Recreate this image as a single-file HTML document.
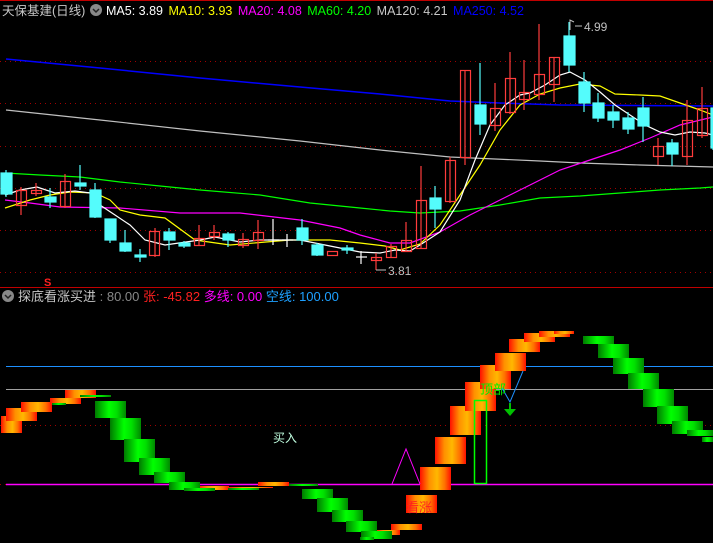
<!DOCTYPE html>
<html><head><meta charset="utf-8"><style>
body{margin:0;background:#000;width:713px;height:543px;overflow:hidden;font-family:"Liberation Sans","Noto Sans CJK SC",sans-serif}
svg{display:block}
</style></head><body>
<svg width="713" height="543" viewBox="0 0 713 543" xmlns="http://www.w3.org/2000/svg">
<defs>
<linearGradient id="o" x1="0" x2="1" y1="0" y2="0">
<stop offset="0" stop-color="#ff1000"/><stop offset="0.3" stop-color="#ff9000"/><stop offset="0.55" stop-color="#ffb800"/><stop offset="0.8" stop-color="#ff7000"/><stop offset="1" stop-color="#ff1000"/></linearGradient>
<linearGradient id="g" x1="0" x2="1" y1="0" y2="0">
<stop offset="0" stop-color="#007a00"/><stop offset="0.45" stop-color="#00ff00"/><stop offset="0.7" stop-color="#00e000"/><stop offset="1" stop-color="#008800"/></linearGradient>
</defs>
<rect width="713" height="543" fill="#000"/>
<line x1="0" y1="0.5" x2="713" y2="0.5" stroke="#c00000"/>
<g stroke="#a00000" stroke-dasharray="1 4" stroke-width="1">
<line x1="0" y1="61.5" x2="713" y2="61.5"/><line x1="0" y1="103.5" x2="713" y2="103.5"/><line x1="0" y1="146.5" x2="713" y2="146.5"/><line x1="0" y1="188.5" x2="713" y2="188.5"/><line x1="0" y1="230.5" x2="713" y2="230.5"/><line x1="0" y1="272.5" x2="713" y2="272.5"/>
<line x1="0" y1="425.5" x2="713" y2="425.5"/><line x1="0" y1="484.5" x2="713" y2="484.5"/>
</g>
<line x1="0" y1="287.5" x2="713" y2="287.5" stroke="#c00000"/>
<g fill="none" stroke-width="1.2">
<polyline stroke="#0000ff" stroke-width="1.5" points="6,59 100,68 200,78 300,87 380,94 450,101 500,103 560,105 713,106"/>
<polyline stroke="#c0c0c0" points="6,110 100,120 200,131 300,141 380,150 450,157 540,161 580,163 640,165 713,167"/>
<polyline stroke="#00ff00" points="5,173 40,175 80,177 120,182 160,186 200,190 260,195 310,203 360,208 390,211 420,213 460,211 500,205 540,198 580,196 620,193 660,190 700,188 713,187"/>
<polyline stroke="#ff00ff" points="5,200 30,203 60,207 120,208 180,213 240,213 300,220 340,228 360,235 390,243 410,243 440,232 470,215 500,200 530,185 560,170 590,160 620,150 650,138 680,125 713,117"/>
<polyline stroke="#ffff00" points="5,208 30,200 50,195 70,192 95,193 110,200 120,210 140,215 165,218 195,240 230,245 290,240 330,240 360,243 385,246 400,250 420,244 440,225 460,195 480,165 500,130 520,105 540,94 560,88 580,84 600,86 615,94 640,95 660,96 680,103 700,110 713,115"/>
<polyline stroke="#ffffff" points="5,195 20,190 37,187 55,193 75,191 90,193 100,205 115,215 130,225 145,240 165,245 200,240 215,237 240,242 260,240 300,240 320,244 340,248 360,252 380,253 395,250 410,251 420,245 440,232 460,200 475,160 490,125 505,105 520,95 530,93 545,85 560,75 570,72 585,80 600,92 615,105 630,115 645,125 660,132 675,135 690,132 705,133 713,135"/>
</g>
<g stroke-width="1.2">
<g stroke="#54fcfc" fill="#54fcfc">
<line x1="6" y1="170" x2="6" y2="197"/><rect x="1" y="173" width="11" height="21"/>
<line x1="50" y1="188" x2="50" y2="208"/><rect x="45" y="197" width="11" height="5"/>
<line x1="80" y1="165" x2="80" y2="190"/><rect x="75" y="183" width="11" height="3"/>
<line x1="95" y1="183" x2="95" y2="218"/><rect x="90" y="190" width="11" height="27"/>
<line x1="110" y1="219" x2="110" y2="243"/><rect x="105" y="219" width="11" height="21"/>
<line x1="125" y1="230" x2="125" y2="252"/><rect x="120" y="243" width="11" height="8"/>
<line x1="140" y1="249" x2="140" y2="262"/><rect x="135" y="255" width="11" height="2"/>
<line x1="169" y1="228" x2="169" y2="250"/><rect x="164" y="232" width="11" height="8"/>
<line x1="184" y1="241" x2="184" y2="248"/><rect x="179" y="243" width="11" height="3"/>
<line x1="228" y1="232" x2="228" y2="247"/><rect x="223" y="234" width="11" height="6"/>
<line x1="302" y1="219" x2="302" y2="245"/><rect x="297" y="228" width="11" height="12"/>
<line x1="317" y1="243" x2="317" y2="256"/><rect x="312" y="245" width="11" height="10"/>
<line x1="347" y1="245" x2="347" y2="254"/><rect x="342" y="248" width="11" height="2"/>
<line x1="435" y1="186" x2="435" y2="228"/><rect x="430" y="198" width="11" height="11"/>
<line x1="480" y1="63" x2="480" y2="135"/><rect x="475" y="105" width="11" height="19"/>
<line x1="569" y1="22" x2="569" y2="72"/><rect x="564" y="36" width="11" height="29"/>
<line x1="584" y1="72" x2="584" y2="112"/><rect x="579" y="82" width="11" height="21"/>
<line x1="598" y1="93" x2="598" y2="122"/><rect x="593" y="103" width="11" height="15"/>
<line x1="613" y1="105" x2="613" y2="128"/><rect x="608" y="112" width="11" height="8"/>
<line x1="628" y1="112" x2="628" y2="134"/><rect x="623" y="118" width="11" height="11"/>
<line x1="643" y1="97" x2="643" y2="142"/><rect x="638" y="108" width="11" height="18"/>
<line x1="672" y1="139" x2="672" y2="166"/><rect x="667" y="143" width="11" height="11"/>
<line x1="713" y1="108" x2="713" y2="150"/><rect x="711" y="108" width="4" height="40"/>
</g>
<g stroke="#ff3c3c" fill="none">
<line x1="21" y1="187" x2="21" y2="215"/><rect x="16.5" y="190.5" width="10" height="15"/>
<line x1="36" y1="183" x2="36" y2="196"/><rect x="31.5" y="190.5" width="10" height="3"/>
<line x1="65" y1="174" x2="65" y2="208"/><rect x="60.5" y="181.5" width="10" height="25"/>
<line x1="155" y1="228" x2="155" y2="257"/><rect x="149.5" y="231.5" width="10" height="24"/>
<line x1="199" y1="225" x2="199" y2="246"/><rect x="194.5" y="238.5" width="10" height="7"/>
<line x1="214" y1="225" x2="214" y2="240"/><rect x="209.5" y="232.5" width="10" height="4"/>
<line x1="243" y1="233" x2="243" y2="248"/><rect x="238.5" y="239.5" width="10" height="6"/>
<line x1="258" y1="220" x2="258" y2="249"/><rect x="253.5" y="232.5" width="10" height="8"/>
<rect x="327.5" y="251.5" width="10" height="4"/>
<line x1="376" y1="253" x2="376" y2="270"/><rect x="371.5" y="257.5" width="10" height="3"/>
<line x1="391" y1="244" x2="391" y2="258"/><rect x="386.5" y="246.5" width="10" height="11"/>
<line x1="406" y1="222" x2="406" y2="252"/><rect x="401.5" y="240.5" width="10" height="11"/>
<line x1="421" y1="166" x2="421" y2="248"/><rect x="416.5" y="200.5" width="10" height="48"/>
<line x1="450" y1="157" x2="450" y2="203"/><rect x="445.5" y="160.5" width="10" height="41"/>
<line x1="465" y1="70" x2="465" y2="165"/><rect x="460.5" y="70.5" width="10" height="87"/>
<line x1="495" y1="83" x2="495" y2="131"/><rect x="490.5" y="108.5" width="10" height="17"/>
<line x1="510" y1="52" x2="510" y2="114"/><rect x="505.5" y="78.5" width="10" height="34"/>
<line x1="524" y1="60" x2="524" y2="110"/><rect x="519.5" y="92.5" width="10" height="7"/>
<line x1="539" y1="24" x2="539" y2="100"/><rect x="534.5" y="74.5" width="10" height="20"/>
<line x1="554" y1="57" x2="554" y2="102"/><rect x="549.5" y="57.5" width="10" height="27"/>
<line x1="658" y1="138" x2="658" y2="165"/><rect x="653.5" y="146.5" width="10" height="10"/>
<line x1="687" y1="100" x2="687" y2="165"/><rect x="682.5" y="120.5" width="10" height="36"/>
<line x1="702" y1="87" x2="702" y2="138"/><rect x="697.5" y="108.5" width="10" height="27"/>
</g>
<g stroke="#ffffff">
<line x1="273" y1="219" x2="273" y2="245"/><line x1="268" y1="240" x2="279" y2="240"/>
<line x1="287" y1="234" x2="287" y2="247"/><line x1="282" y1="240" x2="293" y2="240"/>
<line x1="361" y1="251" x2="361" y2="264"/><line x1="356" y1="257" x2="367" y2="257"/>
</g>
</g>
<polyline points="570,30 570,20 574,22" fill="none" stroke="#c0c0c0"/>
<line x1="575" y1="26" x2="582" y2="26" stroke="#c0c0c0"/>
<text x="584" y="31" fill="#c0c0c0" font-size="12">4.99</text>
<line x1="376" y1="270" x2="386" y2="270" stroke="#c0c0c0"/>
<text x="388" y="275" fill="#c0c0c0" font-size="12">3.81</text>
<text x="44" y="286" fill="#ff2020" font-size="11" font-weight="bold">S</text>
<text x="2" y="15" font-size="12.5" fill="#c8c8c8">天保基建(日线)</text>
<circle cx="96" cy="10" r="6" fill="#888"/><polyline points="93,9 96,12 99,9" fill="none" stroke="#222" stroke-width="1.5"/>
<text x="106" y="15" font-size="12.5"><tspan fill="#fff">MA5: 3.89 </tspan><tspan fill="#ffff00" dx="2">MA10: 3.93 </tspan><tspan fill="#ff00ff" dx="2">MA20: 4.08 </tspan><tspan fill="#00ff00" dx="2">MA60: 4.20 </tspan><tspan fill="#c8c8c8" dx="2">MA120: 4.21 </tspan><tspan fill="#0000ff" dx="2">MA250: 4.52</tspan></text>
<circle cx="8" cy="296" r="6" fill="#888"/><polyline points="5,295 8,298 11,295" fill="none" stroke="#222" stroke-width="1.5"/>
<text x="18" y="301" font-size="13"><tspan fill="#c8c8c8">探底看涨买进</tspan><tspan fill="#888"> : 80.00 </tspan><tspan fill="#ff2020">张: -45.82 </tspan><tspan fill="#ff00ff">多线: 0.00 </tspan><tspan fill="#1ea0ff">空线: 100.00</tspan></text>
<line x1="6" y1="366.5" x2="713" y2="366.5" stroke="#1e90ff"/>
<line x1="6" y1="389.5" x2="713" y2="389.5" stroke="#a0a0a0"/>
<line x1="6" y1="484.5" x2="713" y2="484.5" stroke="#ff00ff" stroke-width="1.5"/>
<g fill="url(#o)">
<rect x="1" y="416" width="21" height="17"/><rect x="6" y="408" width="31" height="13"/><rect x="21" y="402" width="31" height="10"/><rect x="50" y="398" width="31" height="6"/><rect x="65" y="390" width="31" height="8"/>
<rect x="198" y="486" width="31" height="4"/><rect x="258" y="482" width="31" height="4"/><rect x="228" y="487" width="45" height="1"/>
<rect x="376" y="530" width="24" height="5"/><rect x="391" y="524" width="31" height="6"/><rect x="406" y="495" width="31" height="18"/><rect x="420" y="467" width="31" height="23"/><rect x="435" y="437" width="31" height="27"/><rect x="450" y="406" width="31" height="29"/><rect x="465" y="382" width="31" height="29"/><rect x="480" y="365" width="31" height="24"/><rect x="495" y="353" width="31" height="18"/><rect x="509" y="339" width="31" height="13"/><rect x="524" y="333" width="31" height="9"/><rect x="539" y="331" width="31" height="6"/><rect x="554" y="331" width="20" height="3"/>
</g>
<g fill="url(#g)">
<rect x="52" y="403" width="14" height="2"/><rect x="80" y="395" width="31" height="2"/>
<rect x="95" y="401" width="31" height="17"/><rect x="110" y="418" width="31" height="22"/><rect x="124" y="439" width="31" height="23"/><rect x="139" y="458" width="31" height="17"/><rect x="154" y="472" width="31" height="11"/><rect x="169" y="482" width="31" height="8"/><rect x="184" y="488" width="31" height="3"/><rect x="228" y="488" width="31" height="2"/><rect x="289" y="484" width="29" height="2"/>
<rect x="302" y="489" width="31" height="10"/><rect x="317" y="498" width="31" height="14"/><rect x="332" y="510" width="31" height="12"/><rect x="346" y="521" width="31" height="11"/><rect x="361" y="531" width="31" height="8"/><rect x="360" y="537" width="14" height="3"/>
<rect x="583" y="336" width="31" height="8"/><rect x="598" y="344" width="31" height="14"/><rect x="613" y="358" width="31" height="16"/><rect x="628" y="373" width="31" height="16"/><rect x="643" y="389" width="31" height="18"/><rect x="657" y="406" width="31" height="18"/><rect x="672" y="421" width="31" height="13"/><rect x="687" y="430" width="26" height="6"/><rect x="702" y="437" width="11" height="5"/>
</g>
<rect x="474.5" y="400.5" width="12" height="83" fill="none" stroke="#00ff00" stroke-width="1.5"/>
<polyline points="392,484 406,449 420,484" fill="none" stroke="#ff00ff" stroke-width="1"/>
<polyline points="502,388 510,402 523,371" fill="none" stroke="#1e90ff" stroke-width="1"/>
<line x1="510" y1="403" x2="510" y2="410" stroke="#00c000" stroke-width="2"/>
<polygon points="504,409 516,409 510,416" fill="#00c000"/>
<text x="480" y="394" fill="#00ee00" font-size="13">顶部</text>
<text x="406" y="512" fill="#ff2020" font-size="13">看涨</text>
<text x="273" y="442" fill="#c0ffe0" font-size="12">买入</text>
</svg>
</body></html>
